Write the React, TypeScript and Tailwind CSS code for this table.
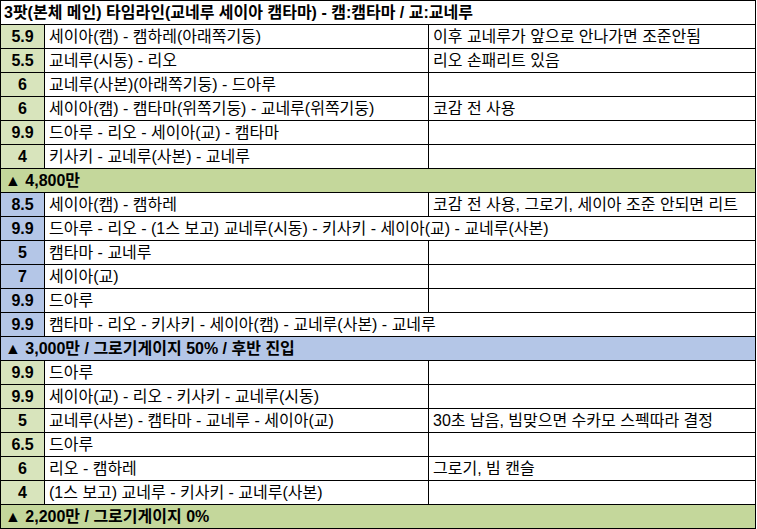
type Row =
  | { kind: "item"; num: string; what: string; note?: string; spill?: boolean }
  | { kind: "section"; label: string; tone: "green" | "blue" };

type Block = { tone: "green" | "blue"; rows: Row[] };

const blocks: Block[] = [
  {
    tone: "green",
    rows: [
      { kind: "item", num: "5.9", what: "세이아(캠) - 캠하레(아래쪽기둥)", note: "이후 교네루가 앞으로 안나가면 조준안됨" },
      { kind: "item", num: "5.5", what: "교네루(시동) - 리오", note: "리오 손패리트 있음" },
      { kind: "item", num: "6", what: "교네루(사본)(아래쪽기둥) - 드아루" },
      { kind: "item", num: "6", what: "세이아(캠) - 캠타마(위쪽기둥) - 교네루(위쪽기둥)", note: "코감 전 사용" },
      { kind: "item", num: "9.9", what: "드아루 - 리오 - 세이아(교) - 캠타마" },
      { kind: "item", num: "4", what: "키사키 - 교네루(사본) - 교네루" },
      { kind: "section", label: "▲ 4,800만", tone: "green" },
    ],
  },
  {
    tone: "blue",
    rows: [
      { kind: "item", num: "8.5", what: "세이아(캠) - 캠하레", note: "코감 전 사용, 그로기, 세이아 조준 안되면 리트" },
      { kind: "item", num: "9.9", what: "드아루 - 리오 - (1스 보고) 교네루(시동) - 키사키 - 세이아(교) - 교네루(사본)", spill: true },
      { kind: "item", num: "5", what: "캠타마 - 교네루" },
      { kind: "item", num: "7", what: "세이아(교)" },
      { kind: "item", num: "9.9", what: "드아루" },
      { kind: "item", num: "9.9", what: "캠타마 - 리오 - 키사키 - 세이아(캠) - 교네루(사본) - 교네루", spill: true },
      { kind: "section", label: "▲ 3,000만 / 그로기게이지 50% / 후반 진입", tone: "blue" },
    ],
  },
  {
    tone: "green",
    rows: [
      { kind: "item", num: "9.9", what: "드아루" },
      { kind: "item", num: "9.9", what: "세이아(교) - 리오 - 키사키 - 교네루(시동)" },
      { kind: "item", num: "5", what: "교네루(사본) - 캠타마 - 교네루 - 세이아(교)", note: "30초 남음, 빔맞으면 수카모 스펙따라 결정" },
      { kind: "item", num: "6.5", what: "드아루" },
      { kind: "item", num: "6", what: "리오 - 캠하레", note: "그로기, 빔 캔슬" },
      { kind: "item", num: "4", what: "(1스 보고) 교네루 - 키사키 - 교네루(사본)" },
      { kind: "section", label: "▲ 2,200만 / 그로기게이지 0%", tone: "green" },
    ],
  },
];

const numBg = { green: "bg-[#d8e4bc]", blue: "bg-[#b4c6e7]" };
const sectionBg = { green: "bg-[#c4d79b]", blue: "bg-[#b4c6e7]" };

function ItemRow({ row, tone }: { row: Extract<Row, { kind: "item" }>; tone: "green" | "blue" }) {
  return (
    <div className="flex h-6 border-b border-black">
      <div
        className={`flex w-[44px] shrink-0 items-center justify-center border-r border-black text-[16px] font-bold ${numBg[tone]}`}
      >
        {row.num}
      </div>
      {row.spill ? (
        <div className="flex min-w-0 flex-1 items-center overflow-hidden whitespace-nowrap border-r border-black pl-1">
          {row.what}
        </div>
      ) : (
        <>
          <div className="flex w-[384px] shrink-0 items-center overflow-hidden whitespace-nowrap border-r border-black pl-1">
            {row.what}
          </div>
          <div className="flex min-w-0 flex-1 items-center overflow-hidden whitespace-nowrap border-r border-black pl-1">
            {row.note}
          </div>
        </>
      )}
    </div>
  );
}

function SectionRow({ label, tone }: { label: string; tone: "green" | "blue" }) {
  return (
    <div
      className={`flex h-6 items-center border-b border-r border-black pl-1 text-[16px] font-bold ${sectionBg[tone]}`}
    >
      {label}
    </div>
  );
}

export default function App() {
  return (
    <div
      className="h-[529px] w-[757px] overflow-hidden bg-white text-[16px] leading-none text-black"
      style={{ fontFamily: '"Liberation Sans", "Noto Sans CJK KR", sans-serif' }}
    >
      <div className="w-[756px] border-l border-t border-black">
        <div className="flex h-6 items-center border-b border-r border-black pl-[3px] text-[16px] font-bold">
          3팟(본체 메인) 타임라인(교네루 세이아 캠타마) - 캠:캠타마 / 교:교네루
        </div>
        {blocks.map((block, bi) =>
          block.rows.map((row, ri) =>
            row.kind === "item" ? (
              <ItemRow key={`${bi}-${ri}`} row={row} tone={block.tone} />
            ) : (
              <SectionRow key={`${bi}-${ri}`} label={row.label} tone={row.tone} />
            ),
          ),
        )}
      </div>
    </div>
  );
}
